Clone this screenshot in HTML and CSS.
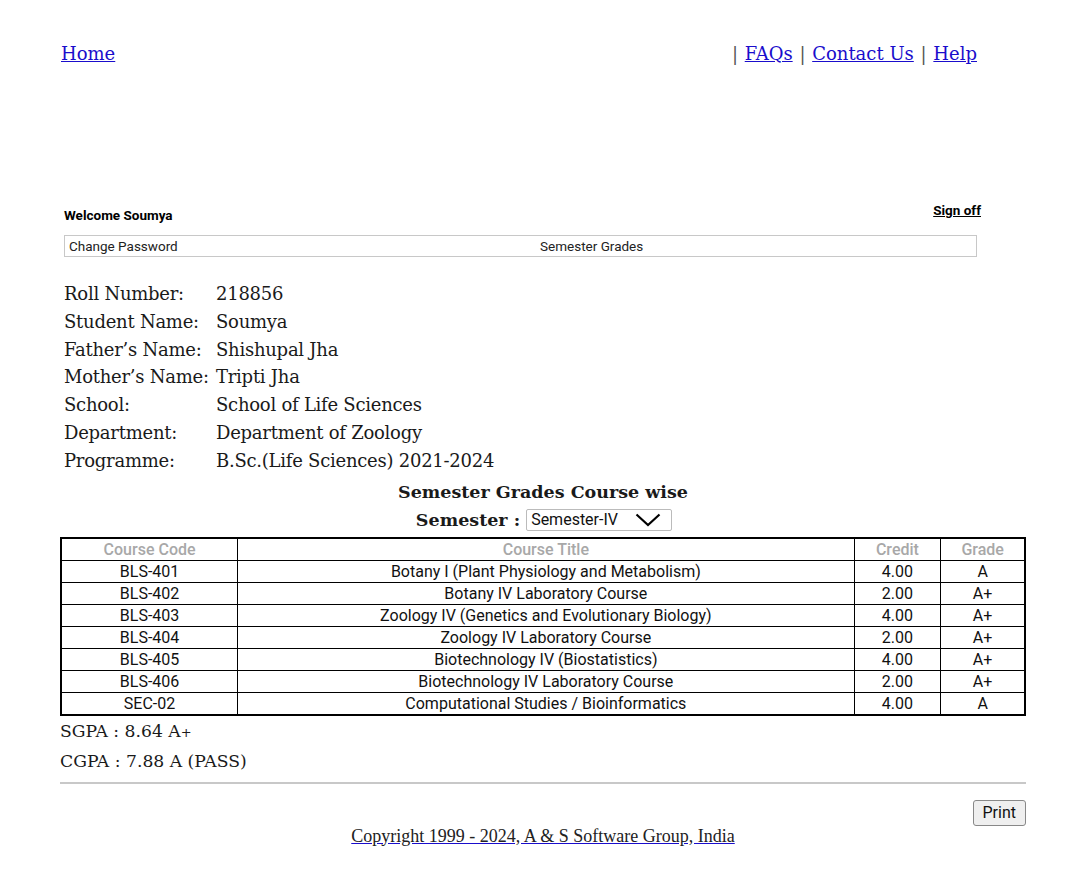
FILE: index.html
```html
<!DOCTYPE html>
<html>
<head>
<meta charset="utf-8">
<link rel="stylesheet" href="styles.css">
</head>
<body>
<div class="page">
  <div class="topbar">
    <a href="#" class="toplink">Home</a>
    <div class="toplinks">
      <span class="sep">|</span> <a href="#" class="toplink">FAQs</a> <span class="sep">|</span> <a href="#" class="toplink">Contact Us</a> <span class="sep">|</span> <a href="#" class="toplink">Help</a>
    </div>
  </div>

  <div class="welcome-row">
    <span class="welcome">Welcome Soumya</span>
    <a href="#" class="signoff">Sign off</a>
  </div>
  <div class="navbox">
    <span class="nav-left">Change Password</span>
    <span class="nav-mid">Semester Grades</span>
  </div>

  <div class="info">
    <div class="lbl">Roll Number:</div><div class="val">218856</div>
    <div class="lbl">Student Name:</div><div class="val">Soumya</div>
    <div class="lbl">Father’s Name:</div><div class="val">Shishupal Jha</div>
    <div class="lbl">Mother’s Name:</div><div class="val">Tripti Jha</div>
    <div class="lbl">School:</div><div class="val">School of Life Sciences</div>
    <div class="lbl">Department:</div><div class="val">Department of Zoology</div>
    <div class="lbl">Programme:</div><div class="val">B.Sc.(Life Sciences) 2021-2024</div>
  </div>

  <div class="title">Semester Grades Course wise</div>
  <div class="semrow">
    <span class="semlabel">Semester :</span>
    <span class="select">Semester-IV
      <svg class="chev" width="26" height="14" viewBox="0 0 26 14"><path d="M1.5 1.5 L13 12 L24.5 1.5" fill="none" stroke="#000" stroke-width="2.2"/></svg>
    </span>
  </div>

  <table class="grades">
    <thead>
      <tr><th class="c1">Course Code</th><th class="c2">Course Title</th><th class="c3">Credit</th><th class="c4">Grade</th></tr>
    </thead>
    <tbody>
      <tr><td>BLS-401</td><td>Botany I (Plant Physiology and Metabolism)</td><td>4.00</td><td>A</td></tr>
      <tr><td>BLS-402</td><td>Botany IV Laboratory Course</td><td>2.00</td><td>A+</td></tr>
      <tr><td>BLS-403</td><td>Zoology IV (Genetics and Evolutionary Biology)</td><td>4.00</td><td>A+</td></tr>
      <tr><td>BLS-404</td><td>Zoology IV Laboratory Course</td><td>2.00</td><td>A+</td></tr>
      <tr><td>BLS-405</td><td>Biotechnology IV (Biostatistics)</td><td>4.00</td><td>A+</td></tr>
      <tr><td>BLS-406</td><td>Biotechnology IV Laboratory Course</td><td>2.00</td><td>A+</td></tr>
      <tr><td>SEC-02</td><td>Computational Studies / Bioinformatics</td><td>4.00</td><td>A</td></tr>
    </tbody>
  </table>

  <div class="gpa first">SGPA : 8.64 A<span class="plus">+</span></div>
  <div class="gpa">CGPA : 7.88 A (PASS)</div>
  <hr class="rule">
  <div class="printrow"><button class="printbtn">Print</button></div>
  <div class="copy"><a href="#" class="copylink">Copyright 1999 - 2024, A &amp; S Software Group, India</a></div>
</div>
</body>
</html>
```

FILE: styles.css
```css
html, body {
  margin: 0;
  padding: 0;
  background: #fff;
}
body {
  font-family: "DejaVu Serif", serif;
  color: #1a1a1a;
}
.page {
  width: 966px;
  margin-left: 60px;
  padding-top: 42px;
}
.topbar {
  display: flex;
  justify-content: space-between;
  align-items: baseline;
  font-size: 18px;
  line-height: 24px;
  padding-left: 1px;
  padding-right: 49px;
}
.toplink {
  color: #1a0dcc;
  text-decoration: underline;
}
.sep {
  color: #555;
  padding: 0 1px;
}
.welcome-row {
  display: flex;
  justify-content: space-between;
  align-items: flex-start;
  margin-top: 136px;
  padding-left: 4px;
  padding-right: 45px;
  font-family: Roboto, sans-serif;
}
.welcome {
  font-size: 13.5px;
  font-weight: bold;
  color: #000;
  padding-top: 5px;
}
.signoff {
  font-size: 13.5px;
  font-weight: bold;
  color: #000;
  text-decoration: underline;
}
.navbox {
  margin: 12px 49px 0 4px;
  border: 1px solid #c8c8c8;
  height: 20px;
  display: flex;
  align-items: center;
  font-family: Roboto, sans-serif;
  font-size: 13.5px;
  color: #222;
}
.nav-left {
  padding-left: 4px;
  width: 471px;
}
.info {
  display: grid;
  grid-template-columns: 152px auto;
  margin-top: 23px;
  padding-left: 4px;
  font-size: 18px;
  letter-spacing: -0.25px;
  line-height: 27.8px;
  white-space: nowrap;
  color: #1a1a1a;
}
.title {
  text-align: center;
  font-weight: bold;
  font-size: 17.5px;
  line-height: 26px;
  margin-top: 4px;
}
.semrow {
  display: flex;
  justify-content: center;
  align-items: center;
  gap: 6px;
  height: 26px;
  padding: 2px 0 0 2px;
}
.semlabel {
  font-weight: bold;
  font-size: 17.5px;
}
.select {
  display: flex;
  align-items: center;
  justify-content: space-between;
  width: 130px;
  height: 20px;
  border: 1px solid #bbb;
  border-radius: 2px;
  padding: 0 10px 0 4px;
  font-family: Roboto, sans-serif;
  font-size: 16px;
  color: #111;
}
.chev {
  display: block;
}
.grades {
  width: 966px;
  border-collapse: collapse;
  margin-top: 4px;
  font-family: Roboto, sans-serif;
  border: 2px solid #000;
}
.grades th, .grades td {
  border: 1.5px solid #000;
  text-align: center;
  padding: 0;
  height: 21px;
  line-height: 19px;
}
.grades th {
  color: #a8a8a8;
  font-weight: 500;
  font-size: 16px;
}
.grades td {
  font-size: 16px;
  color: #111;
}
.c1 { width: 176px; }
.c2 { width: 619px; }
.c3 { width: 86px; }
.c4 { width: 83px; }
.gpa {
  font-size: 17.2px;
  line-height: 29px;
}
.gpa.first {
  margin-top: 1px;
}
.plus {
  font-size: 13px;
}
.rule {
  border: none;
  border-top: 2px solid #c8c8c8;
  margin: 6px 0 0 0;
}
.printrow {
  display: flex;
  justify-content: flex-end;
  margin-top: 16px;
}
.printbtn {
  font-family: Roboto, sans-serif;
  font-size: 16px;
  padding: 0 9px;
  height: 26px;
  border: 1px solid #888;
  border-radius: 3px;
  background: #efefef;
  color: #111;
}
.copy {
  text-align: center;
  margin-top: 0;
  font-family: "Liberation Serif", serif;
  font-size: 18px;
}
.copylink {
  color: #222;
  text-decoration: underline;
  text-decoration-color: #1a0dcc;
}
```
